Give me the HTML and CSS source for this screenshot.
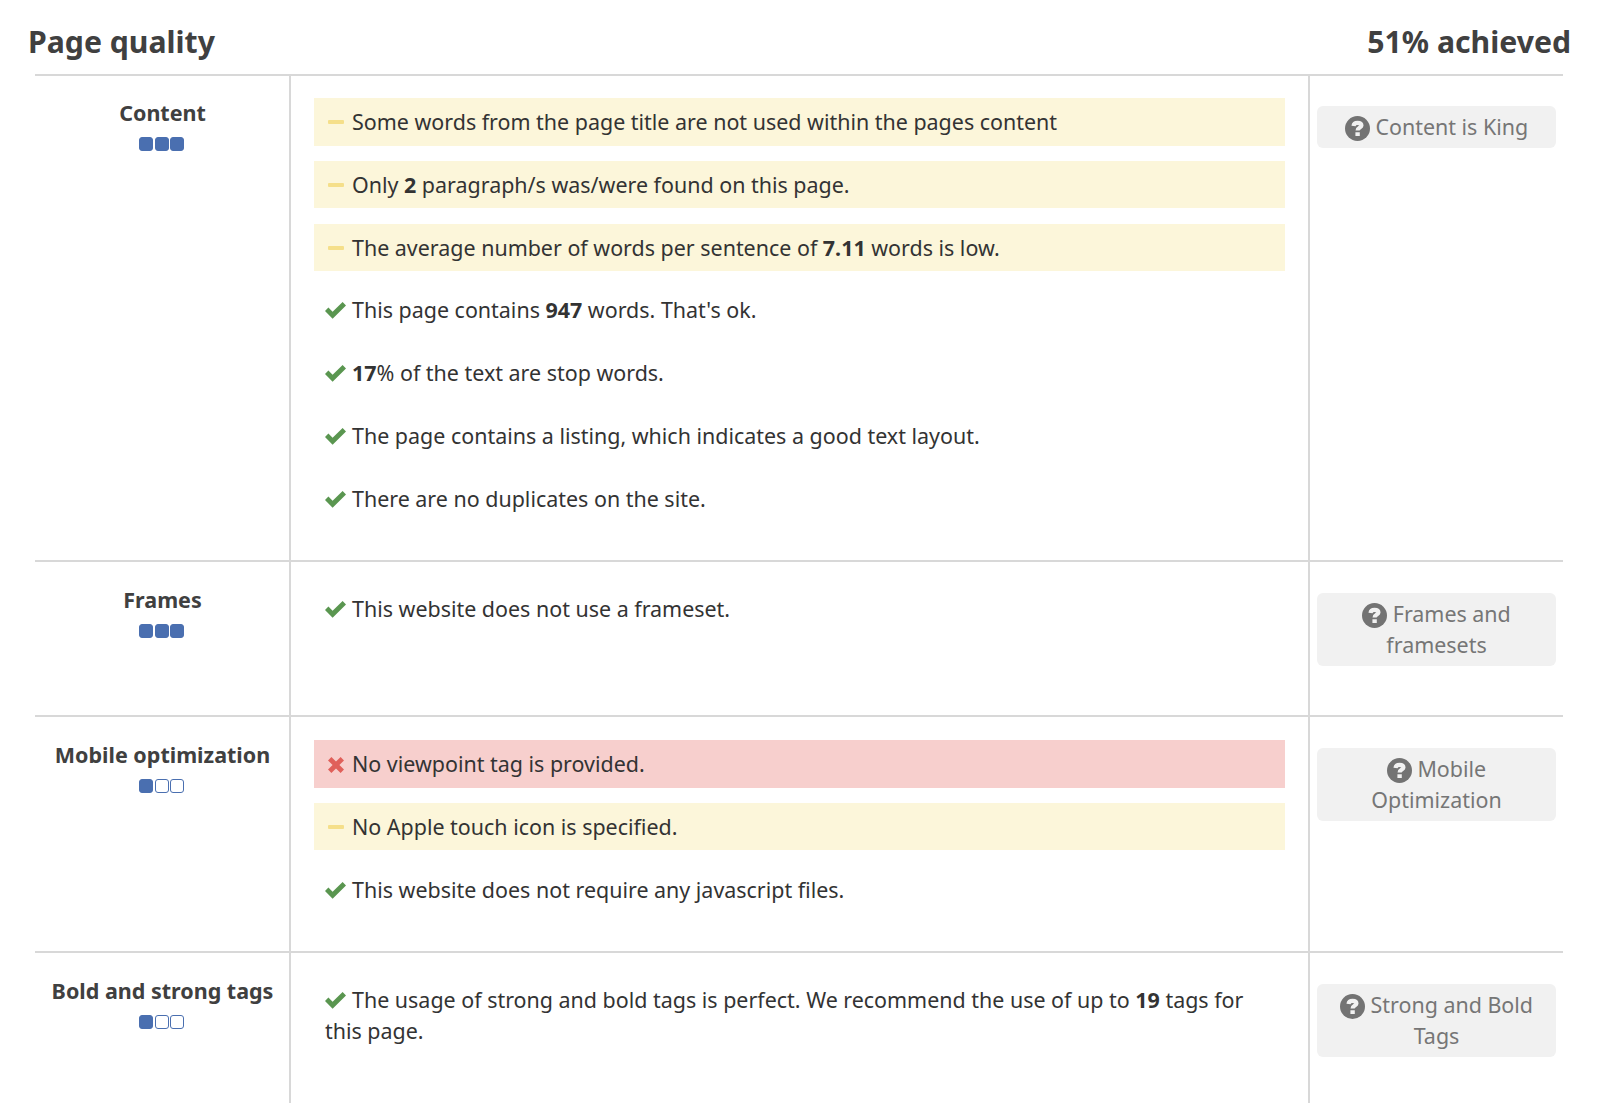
FILE: index.html
```html
<!DOCTYPE html>
<html lang="en">
<head>
<meta charset="utf-8">
<title>Page quality</title>
<link rel="stylesheet" href="styles.css">
</head>
<body>
<svg class="defs" width="0" height="0" aria-hidden="true">
  <symbol id="i-check" viewBox="0 0 21 17"><path d="M0 9 L3.4 5.6 L7.6 9.8 L17.6 0 L21 3.4 L7.6 16.8 Z"/></symbol>
  <symbol id="i-dash" viewBox="0 0 16 4"><rect width="16" height="4" rx="1"/></symbol>
  <symbol id="i-x" viewBox="0 0 16 16"><path d="M0 3.4 L3.4 0 L8 4.6 L12.6 0 L16 3.4 L11.4 8 L16 12.6 L12.6 16 L8 11.4 L3.4 16 L0 12.6 L4.6 8 Z"/></symbol>
  <symbol id="i-help" viewBox="0 0 24 24"><circle cx="12" cy="12" r="12" fill="#737373"/><path fill="none" stroke="#f1f1f1" stroke-width="4" d="M8.2 9.6 C8.4 7.6 10 6.6 12 6.6 C14.4 6.6 15.8 7.6 15.8 9.2 C15.8 11.2 12.1 11.2 12.1 14"/><rect x="10" y="15.6" width="4.2" height="3.6" fill="#f1f1f1"/></symbol>
</svg>
<main class="report">
  <header class="head">
    <h2>Page quality</h2>
    <h2>51% achieved</h2>
  </header>
  <div class="table">
    <section class="row row-content">
      <div class="cat"><h3>Content</h3><div class="pips"><i class="on"></i><i class="on"></i><i class="on"></i></div></div>
      <ul class="items">
        <li class="warn"><svg class="ic dash"><use href="#i-dash"/></svg>Some words from the page title are not used within the pages content</li>
        <li class="warn"><svg class="ic dash"><use href="#i-dash"/></svg>Only <b>2</b> paragraph/s was/were found on this page.</li>
        <li class="warn"><svg class="ic dash"><use href="#i-dash"/></svg>The average number of words per sentence of <b>7.11</b> words is low.</li>
        <li><svg class="ic check"><use href="#i-check"/></svg>This page contains <b>947</b> words. That's ok.</li>
        <li><svg class="ic check"><use href="#i-check"/></svg><b>17</b>% of the text are stop words.</li>
        <li><svg class="ic check"><use href="#i-check"/></svg>The page contains a listing, which indicates a good text layout.</li>
        <li><svg class="ic check"><use href="#i-check"/></svg>There are no duplicates on the site.</li>
      </ul>
      <div class="side"><a class="help"><svg class="q"><use href="#i-help"/></svg> Content is King</a></div>
    </section>
    <section class="row row-frames">
      <div class="cat"><h3>Frames</h3><div class="pips"><i class="on"></i><i class="on"></i><i class="on"></i></div></div>
      <ul class="items">
        <li><svg class="ic check"><use href="#i-check"/></svg>This website does not use a frameset.</li>
      </ul>
      <div class="side"><a class="help"><svg class="q"><use href="#i-help"/></svg> Frames and framesets</a></div>
    </section>
    <section class="row row-mobile">
      <div class="cat"><h3>Mobile optimization</h3><div class="pips"><i class="on"></i><i></i><i></i></div></div>
      <ul class="items">
        <li class="err"><svg class="ic x"><use href="#i-x"/></svg>No viewpoint tag is provided.</li>
        <li class="warn"><svg class="ic dash"><use href="#i-dash"/></svg>No Apple touch icon is specified.</li>
        <li><svg class="ic check"><use href="#i-check"/></svg>This website does not require any javascript files.</li>
      </ul>
      <div class="side"><a class="help"><svg class="q"><use href="#i-help"/></svg> Mobile Optimization</a></div>
    </section>
    <section class="row row-bold">
      <div class="cat"><h3>Bold and strong tags</h3><div class="pips"><i class="on"></i><i></i><i></i></div></div>
      <ul class="items">
        <li><svg class="ic check"><use href="#i-check"/></svg>The usage of strong and bold tags is perfect. We recommend the use of up to <b>19</b> tags for this page.</li>
      </ul>
      <div class="side"><a class="help"><svg class="q"><use href="#i-help"/></svg> Strong and Bold Tags</a></div>
    </section>
  </div>
</main>
</body>
</html>
```
FILE: styles.css
```css
* { box-sizing: border-box; }
html, body { margin: 0; padding: 0; background: #fff; }
body { height: 1104px; overflow: hidden; font-family: "Noto Sans", "Open Sans", sans-serif; color: #3a3a3a; }
.defs { position: absolute; }
.report { padding: 0 29px 0 28px; }
.head { display: flex; justify-content: space-between; height: 74px; padding-top: 21px; }
.head h2 { margin: 0; font-size: 30.2px; line-height: 42px; font-weight: 700; color: #404040; }
.table { margin: 0 8px 0 7px; }
.row { display: grid; grid-template-columns: 254px 1fr 253px; border-top: 2px solid #d8d8d8; }
.row-content { height: 486px; }
.row-frames { height: 155px; }
.row-mobile { height: 236px; }
.row-bold { height: 152px; }
.cat { padding-top: 23px; text-align: center; }
.row + .row .cat { padding-top: 24px; }
.cat h3 { margin: 0; padding-left: 1px; font-size: 21.5px; line-height: 28px; font-weight: 700; color: #404040; }
.pips { display: flex; justify-content: center; gap: 1.5px; margin-top: 10px; padding-right: 1px; }
.pips i { width: 14px; height: 14px; border: 1.5px solid #4a6fb0; border-radius: 3px; background: #fff; }
.pips i.on { background: #4a6fb0; }
.items { list-style: none; margin: 0; padding: 22px 23px 0 23px; border-left: 2px solid #d8d8d8; border-right: 2px solid #d8d8d8; }
.row + .row .items { padding-top: 23px; }
.items li { padding: 8px 11px; margin-bottom: 15.3px; min-height: 47.5px; font-size: 21.45px; line-height: 31px; color: #333; }
.items li.warn { background: #fcf6da; }
.items li.err { background: #f7cfcd; }
.items b { font-weight: 700; }
.ic { display: inline-block; margin-right: 6px; }
.check { width: 21px; height: 17px; fill: #5a9650; vertical-align: -1px; }
.dash { width: 16px; height: 4px; fill: #f5df8a; vertical-align: 6px; margin-left: 3px; margin-right: 8px; }
.x { width: 16px; height: 16px; fill: #e0605a; margin-left: 3px; margin-right: 8px; vertical-align: -1px; }
.side { padding: 30px 7px 0 7px; }
.row + .row .side { padding-top: 31px; }
.help { display: block; padding: 5px 10px 6px; border-radius: 6px; background: #f1f1f1; text-align: center; font-size: 21.45px; line-height: 31px; color: #767676; }
.q { width: 25px; height: 25px; vertical-align: -6px; }
```
